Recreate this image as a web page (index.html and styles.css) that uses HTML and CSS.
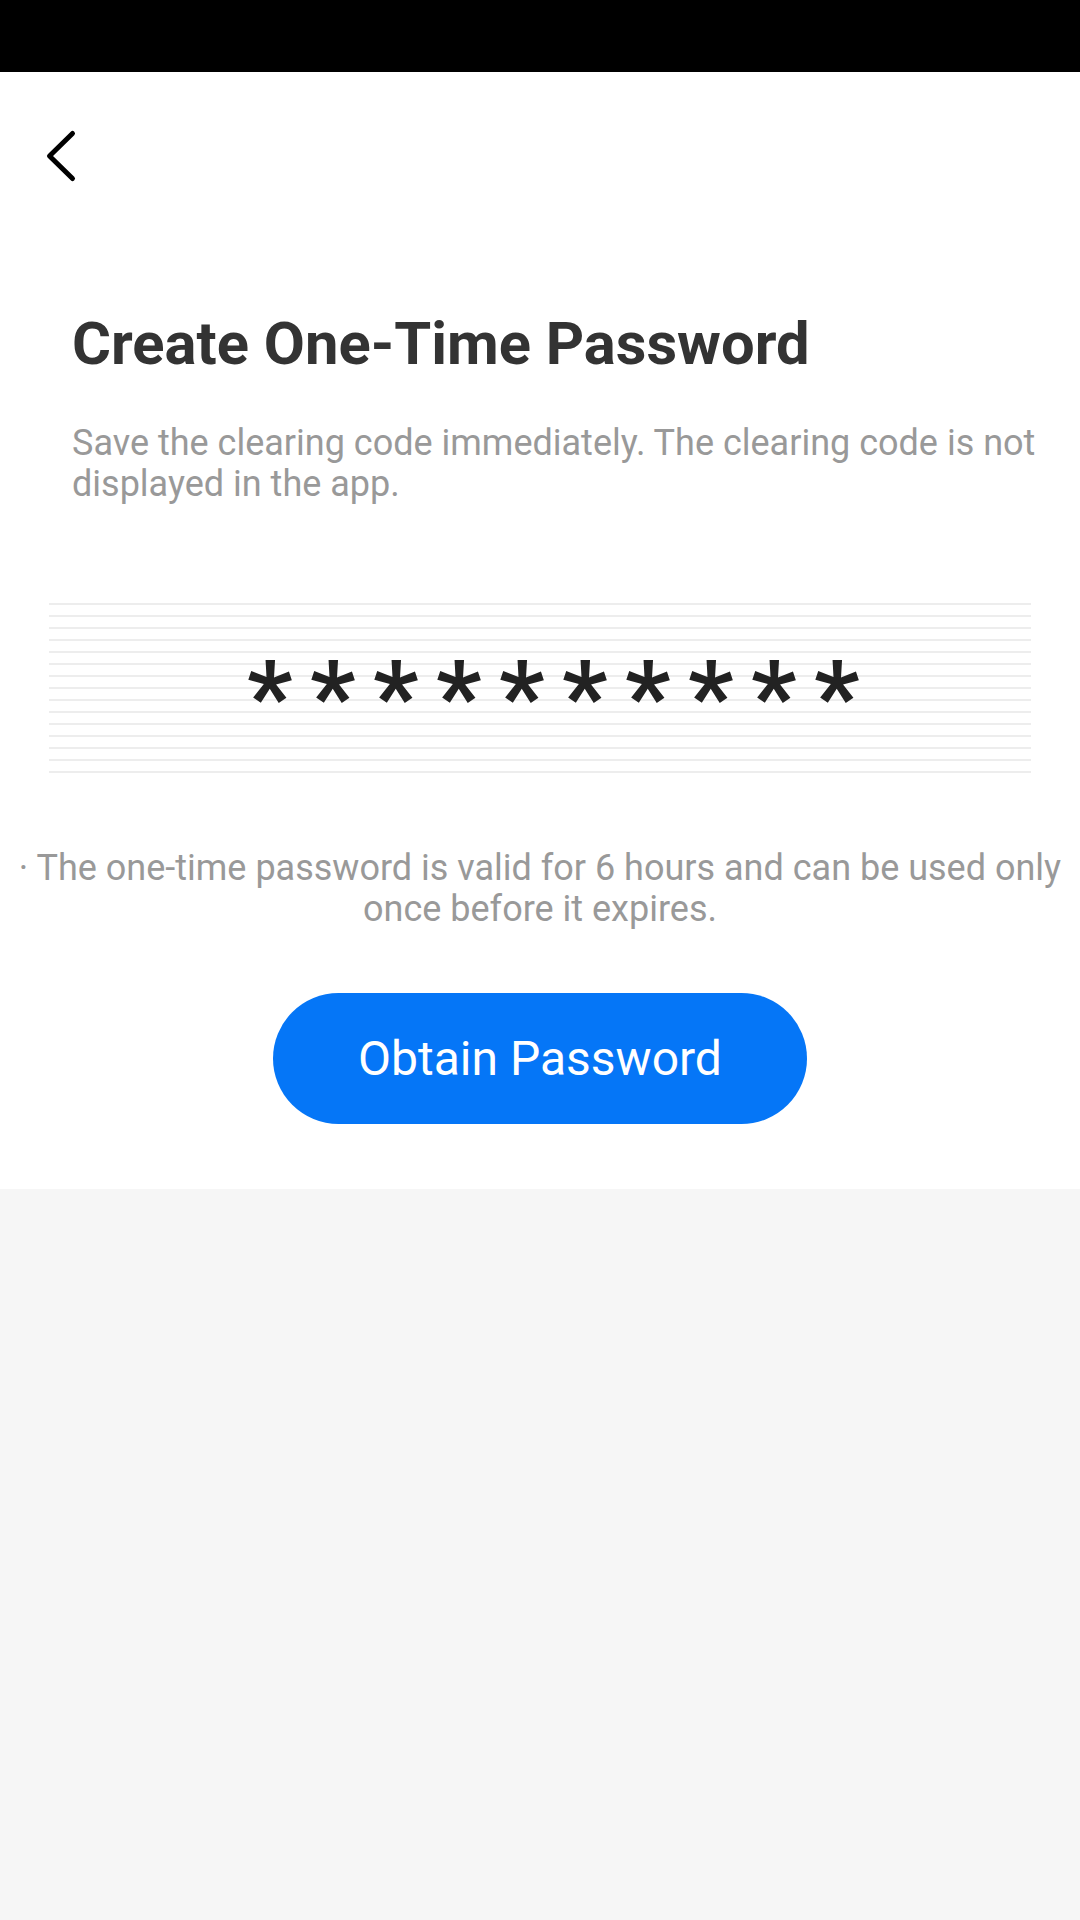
FILE: index.html
```html
<!DOCTYPE html>
<html lang="en">
<head>
  <meta charset="UTF-8">
  <title>Create One-Time Password</title>
  <link rel="stylesheet" href="styles.css">
</head>
<body>

  <div class="status-bar"></div>

  <div class="page">
    <div class="nav">
      <a class="back" href="#" aria-label="Back">
        <svg width="34" height="56" viewBox="0 0 34 56">
          <path d="M28.5 4.5 L5.5 27 L28.5 49.5" fill="none" stroke="#000" stroke-width="5" stroke-linecap="round" stroke-linejoin="round"/>
        </svg>
      </a>
    </div>

    <h1>Create One-Time Password</h1>
    <p class="subtitle">Save the clearing code immediately. The clearing code is not displayed in the app.</p>

    <div class="code-box">
      <span class="code">**********</span>
    </div>

    <p class="note">· The one-time password is valid for 6 hours and can be used only once before it expires.</p>

    <button class="obtain" id="obtainButton">Obtain Password</button>
  </div>

</body>
</html>
```

FILE: styles.css
```css
* {
  box-sizing: border-box;
}

html, body {
  margin: 0;
  padding: 0;
}

body {
  font-family: Roboto, 'Noto Sans', sans-serif;
  background-color: #f6f6f6;
  min-height: 100vh;
}

.status-bar {
  height: 72px;
  background-color: #000;
}

.page {
  background-color: #fff;
  display: flex;
  flex-direction: column;
  padding-bottom: 65px;
}

.nav {
  height: 150px;
  padding: 57px 0 0 44px;
}

.back {
  display: inline-block;
}

h1 {
  margin: 86px 0 0;
  padding: 0 40px 0 72px;
  font-size: 59.7px;
  line-height: 72px;
  font-weight: 700;
  color: #333;
}

.subtitle {
  margin: 43px 0 0;
  padding: 0 30px 0 72px;
  font-size: 36px;
  line-height: 41px;
  color: #999;
}

.code-box {
  margin: 98px 49px 0;
  height: 170px;
  background: repeating-linear-gradient(#ededed 0, #ededed 2px, transparent 2px, transparent 12px);
  display: flex;
  align-items: center;
  justify-content: center;
}

.code {
  font-size: 100px;
  font-weight: 700;
  line-height: 100px;
  letter-spacing: 17.6px;
  color: #222;
  padding: 18px 0 0 44px;
}

.note {
  margin: 75px 0 0;
  padding: 0 6px;
  font-size: 36px;
  line-height: 41px;
  text-align: center;
  color: #999;
}

.obtain {
  align-self: center;
  margin-top: 63px;
  width: 534px;
  height: 131px;
  border: none;
  border-radius: 66px;
  background-color: #0576f7;
  color: #fff;
  font-family: inherit;
  font-size: 48px;
  cursor: pointer;
}
```
